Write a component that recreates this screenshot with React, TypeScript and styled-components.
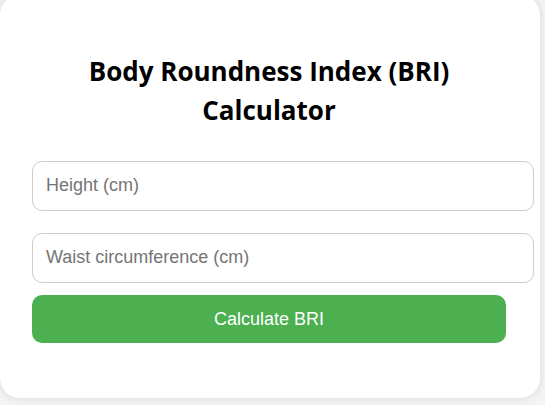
import React from "react";
import styled, { createGlobalStyle } from "styled-components";

const GlobalStyle = createGlobalStyle`
  html, body {
    margin: 0;
    padding: 0;
    background: #f4f4f4;
    overflow: hidden;
  }
  body {
    font-family: "Liberation Sans", Arial, sans-serif;
  }
`;

const Page = styled.div`
  width: 545px;
  height: 405px;
  overflow: hidden;
`;

const Card = styled.div`
  box-sizing: border-box;
  width: 540px;
  height: 403px;
  margin-top: -5px;
  background: #ffffff;
  border-radius: 20px;
  box-shadow: 0 0 10px rgba(0, 0, 0, 0.12);
  padding: 57px 34px 0 32px;
`;

const Title = styled.h1`
  margin: 0 0 31px;
  font-family: "Open Sans", "Noto Sans", sans-serif;
  font-weight: 700;
  font-size: 26px;
  line-height: 39px;
  color: #000;
  text-align: center;
`;

const Form = styled.form`
  display: flex;
  flex-direction: column;
  align-items: flex-start;
`;

const Input = styled.input<{ $gap: number }>`
  box-sizing: content-box;
  width: 100%;
  margin: 0 0 ${(p) => p.$gap}px;
  padding: 13px 13px 14px;
  border: 1px solid #cccccc;
  border-radius: 10px;
  font-family: "Liberation Sans", Arial, sans-serif;
  font-size: 18px;
  color: #333;
  outline: none;
  &::placeholder {
    color: #757575;
  }
`;

const Button = styled.button`
  box-sizing: border-box;
  width: 100%;
  height: 48px;
  border: none;
  border-radius: 10px;
  background: #4caf50;
  color: #ffffff;
  font-family: "Liberation Sans", Arial, sans-serif;
  font-size: 18px;
  cursor: pointer;
`;

export default function App() {
  return (
    <>
      <GlobalStyle />
      <Page>
        <Card>
          <Title>
            Body Roundness Index (BRI)
            <br />
            Calculator
          </Title>
          <Form onSubmit={(e) => e.preventDefault()}>
            <Input $gap={22} type="number" placeholder="Height (cm)" />
            <Input $gap={12} type="number" placeholder="Waist circumference (cm)" />
            <Button type="submit">Calculate BRI</Button>
          </Form>
        </Card>
      </Page>
    </>
  );
}
